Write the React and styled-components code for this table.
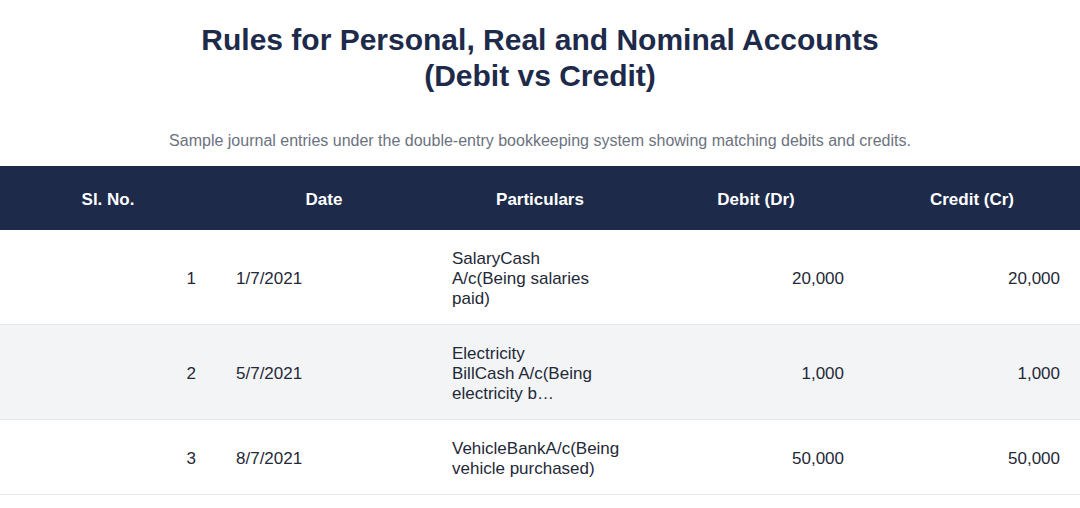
import React from "react";
import styled, { createGlobalStyle } from "styled-components";

const GlobalStyle = createGlobalStyle`
  html, body { margin: 0; padding: 0; background: #ffffff; }
  body { font-family: "Liberation Sans", Arial, Helvetica, sans-serif; }
  * { box-sizing: border-box; }
`;

const Page = styled.div`
  width: 1080px;
  padding-top: 22px;
`;

const Title = styled.h1`
  margin: 0;
  text-align: center;
  font-size: 30px;
  line-height: 36px;
  font-weight: 700;
  color: #1e2a4a;
`;

const Subtitle = styled.p`
  margin: 37px 0 15px;
  text-align: center;
  font-size: 16px;
  line-height: 20px;
  color: #6b7280;
`;

const Table = styled.table`
  width: 100%;
  border-collapse: collapse;
  table-layout: fixed;
`;

const HeadRow = styled.tr`
  background: #1e2a4a;
`;

const HeadCell = styled.th`
  padding: 24px 20px 20px;
  font-size: 17px;
  line-height: 20px;
  font-weight: 700;
  color: #ffffff;
  text-align: center;
`;

const Row = styled.tr`
  background: ${(p) => (p.$alt ? "#f3f4f6" : "#ffffff")};
  border-bottom: 1px solid #e5e7eb;
`;

const Cell = styled.td`
  padding: 19px 20px 15px;
  font-size: 17px;
  line-height: 20px;
  color: #1f2937;
  vertical-align: middle;
  text-align: ${(p) => p.$align || "left"};
`;

const Particulars = styled.div`
  max-width: 152px;
  white-space: pre-line;
`;

const rows = [
  { no: 1, date: "1/7/2021", text: "SalaryCash A/c(Being salaries paid)", dr: "20,000", cr: "20,000" },
  { no: 2, date: "5/7/2021", text: "Electricity\nBillCash A/c(Being electricity b…", dr: "1,000", cr: "1,000" },
  { no: 3, date: "8/7/2021", text: "VehicleBankA/c(Being vehicle purchased)", dr: "50,000", cr: "50,000" },
];

export default function App() {
  return (
    <>
      <GlobalStyle />
      <Page>
        <Title>
          Rules for Personal, Real and Nominal Accounts
          <br />
          (Debit vs Credit)
        </Title>
        <Subtitle>
          Sample journal entries under the double-entry bookkeeping system showing matching debits and credits.
        </Subtitle>
        <Table>
          <thead>
            <HeadRow>
              <HeadCell>Sl. No.</HeadCell>
              <HeadCell>Date</HeadCell>
              <HeadCell>Particulars</HeadCell>
              <HeadCell>Debit (Dr)</HeadCell>
              <HeadCell>Credit (Cr)</HeadCell>
            </HeadRow>
          </thead>
          <tbody>
            {rows.map((r, i) => (
              <Row key={r.no} $alt={i % 2 === 1}>
                <Cell $align="right">{r.no}</Cell>
                <Cell>{r.date}</Cell>
                <Cell>
                  <Particulars>{r.text}</Particulars>
                </Cell>
                <Cell $align="right">{r.dr}</Cell>
                <Cell $align="right">{r.cr}</Cell>
              </Row>
            ))}
          </tbody>
        </Table>
      </Page>
    </>
  );
}
